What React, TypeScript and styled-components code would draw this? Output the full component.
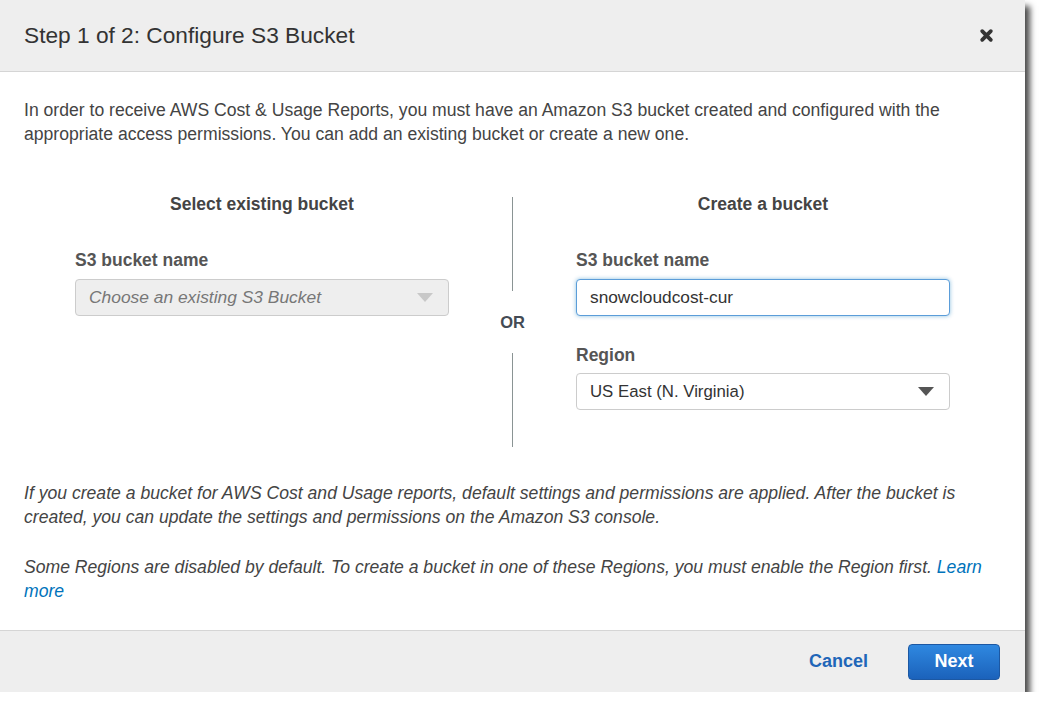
import styled, { createGlobalStyle } from "styled-components";

const GlobalStyle = createGlobalStyle`
  body {
    margin: 0;
    background: #ffffff;
    font-family: "Liberation Sans", Arial, Helvetica, sans-serif;
    color: #444444;
  }
`;

const Dialog = styled.div`
  width: 1025px;
  height: 692px;
  display: flex;
  flex-direction: column;
  background: #ffffff;
  box-shadow: 5px 6px 6px rgba(0, 0, 0, 0.7);
`;

const Header = styled.div`
  height: 71px;
  display: flex;
  align-items: center;
  justify-content: space-between;
  padding: 0 31px 0 24px;
  background: #eeeeee;
  border-bottom: 1px solid #d5d5d5;
`;

const Title = styled.h1`
  margin: 0;
  font-size: 22.7px;
  font-weight: 400;
  color: #333333;
`;

const CloseButton = styled.button`
  border: 0;
  padding: 0;
  background: none;
  display: flex;
  cursor: pointer;
`;

const Body = styled.div`
  flex: 1;
  padding: 26px 24px 27px;
`;

const Text = styled.p<{ $italic?: boolean; $gap?: number }>`
  margin: ${(p) => p.$gap ?? 0}px 0 0;
  font-size: 17.6px;
  line-height: 24px;
  font-style: ${(p) => (p.$italic ? "italic" : "normal")};
  color: #444444;
`;

const Link = styled.a`
  color: #0073bb;
  text-decoration: none;
`;

const Columns = styled.div`
  margin-top: 46px;
  padding: 0 51px;
  display: grid;
  grid-template-columns: 374px 1fr 374px;
`;

const Column = styled.div`
  display: flex;
  flex-direction: column;
`;

const ColumnTitle = styled.div`
  font-size: 17.5px;
  line-height: 24px;
  font-weight: 700;
  text-align: center;
  color: #444444;
`;

const Label = styled.label<{ $gap: number }>`
  margin-top: ${(p) => p.$gap}px;
  font-size: 17.5px;
  line-height: 24px;
  font-weight: 700;
  color: #555555;
`;

const Field = styled.div<{
  $gap: number;
  $size: number;
  $disabled?: boolean;
  $focused?: boolean;
}>`
  margin-top: ${(p) => p.$gap}px;
  height: 37px;
  box-sizing: border-box;
  display: flex;
  align-items: center;
  justify-content: space-between;
  padding: 0 15px 0 13px;
  border: 1px solid ${(p) => (p.$focused ? "#5b9dd9" : "#cccccc")};
  border-radius: 4px;
  background: ${(p) => (p.$disabled ? "#eeeeee" : "#ffffff")};
  box-shadow: ${(p) => (p.$focused ? "0 0 4px rgba(0, 115, 187, 0.45)" : "none")};
  font-size: ${(p) => p.$size}px;
  font-style: ${(p) => (p.$disabled ? "italic" : "normal")};
  color: ${(p) => (p.$disabled ? "#777777" : "#333333")};
`;

const Divider = styled.div`
  padding-top: 5px;
  display: flex;
  flex-direction: column;
  align-items: center;
`;

const Rule = styled.div`
  width: 1px;
  height: 94px;
  background: #8a9494;
`;

const Or = styled.div`
  height: 62px;
  display: flex;
  align-items: center;
  font-size: 16.5px;
  font-weight: 700;
  color: #444b55;
`;

const Footer = styled.div`
  height: 61px;
  display: flex;
  align-items: center;
  justify-content: flex-end;
  gap: 40px;
  padding-right: 25px;
  background: #eeeeee;
  border-top: 1px solid #d5d5d5;
`;

const CancelButton = styled.button`
  border: 0;
  padding: 0;
  background: none;
  font-family: inherit;
  font-size: 18px;
  font-weight: 700;
  color: #1f66b8;
  cursor: pointer;
`;

const NextButton = styled.button`
  width: 92px;
  height: 36px;
  border: 1px solid #1c58a3;
  border-radius: 4px;
  background: linear-gradient(#2f88e0, #1b62bb);
  font-family: inherit;
  font-size: 18px;
  font-weight: 700;
  color: #ffffff;
  cursor: pointer;
`;

function Caret({ color }: { color: string }) {
  return (
    <svg width="16" height="9" viewBox="0 0 16 9">
      <path d="M0 0 H16 L8 9 Z" fill={color} />
    </svg>
  );
}

function CloseIcon() {
  return (
    <svg width="15" height="15" viewBox="0 0 15 15">
      <path
        d="M3.2 3.2 L11.8 11.8 M11.8 3.2 L3.2 11.8"
        stroke="#333333"
        strokeWidth="3.8"
        strokeLinecap="round"
      />
    </svg>
  );
}

export default function App() {
  return (
    <>
      <GlobalStyle />
      <Dialog>
        <Header>
          <Title>Step 1 of 2: Configure S3 Bucket</Title>
          <CloseButton aria-label="Close">
            <CloseIcon />
          </CloseButton>
        </Header>
        <Body>
          <Text>
            In order to receive AWS Cost &amp; Usage Reports, you must have an Amazon S3
            bucket created and configured with the appropriate access permissions. You
            can add an existing bucket or create a new one.
          </Text>
          <Columns>
            <Column>
              <ColumnTitle>Select existing bucket</ColumnTitle>
              <Label $gap={32}>S3 bucket name</Label>
              <Field $gap={7} $size={17.4} $disabled>
                Choose an existing S3 Bucket
                <Caret color="#c8c8c8" />
              </Field>
            </Column>
            <Divider>
              <Rule />
              <Or>OR</Or>
              <Rule />
            </Divider>
            <Column>
              <ColumnTitle>Create a bucket</ColumnTitle>
              <Label $gap={32}>S3 bucket name</Label>
              <Field $gap={7} $size={17.3} $focused>
                snowcloudcost-cur
              </Field>
              <Label $gap={27}>Region</Label>
              <Field $gap={6} $size={16.8}>
                US East (N. Virginia)
                <Caret color="#555555" />
              </Field>
            </Column>
          </Columns>
          <Text $italic $gap={34}>
            If you create a bucket for AWS Cost and Usage reports, default settings and
            permissions are applied. After the bucket is created, you can update the
            settings and permissions on the Amazon S3 console.
          </Text>
          <Text $italic $gap={26}>
            Some Regions are disabled by default. To create a bucket in one of these
            Regions, you must enable the Region first. <Link href="#">Learn more</Link>
          </Text>
        </Body>
        <Footer>
          <CancelButton>Cancel</CancelButton>
          <NextButton>Next</NextButton>
        </Footer>
      </Dialog>
    </>
  );
}
